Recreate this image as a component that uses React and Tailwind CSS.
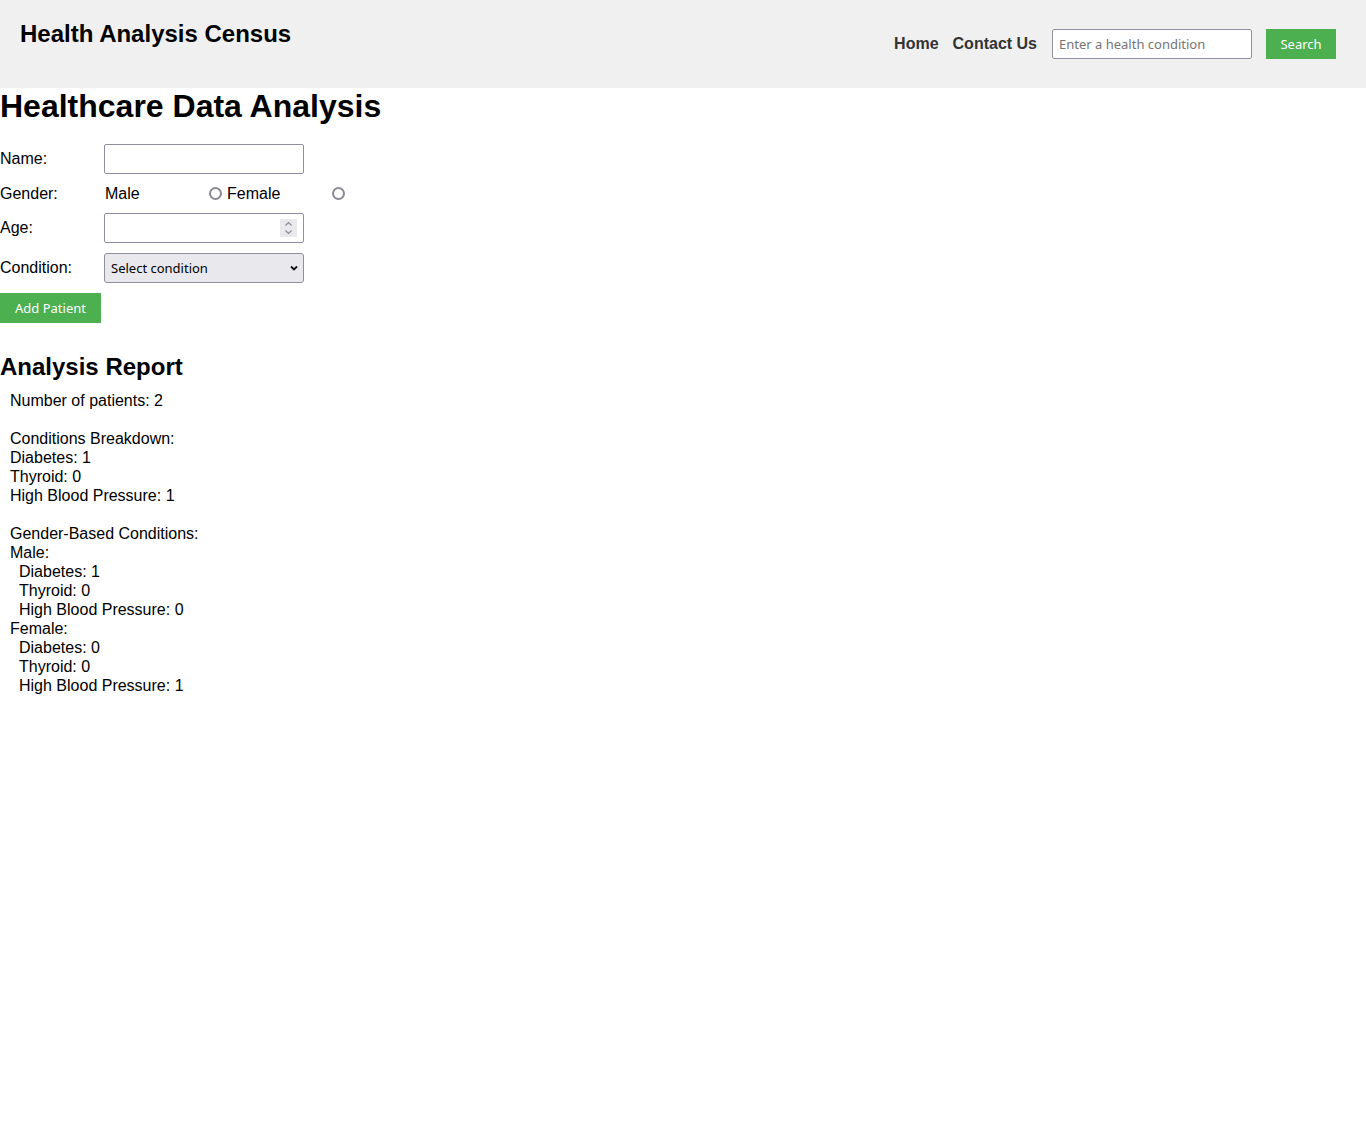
import { useState } from 'react';

const ctrl = "font-['Noto_Sans',sans-serif] text-[13px]";
const radio = 'm-0 h-[13px] w-[13px] appearance-none rounded-full border-2 border-[#8a8a94] bg-white checked:border-[4px] checked:border-[#3b82f6]';

const report = {
  total: 2,
  conditions: { Diabetes: 1, Thyroid: 0, 'High Blood Pressure': 1 },
  byGender: {
    Male: { Diabetes: 1, Thyroid: 0, 'High Blood Pressure': 0 },
    Female: { Diabetes: 0, Thyroid: 0, 'High Blood Pressure': 1 },
  },
};

export default function App() {
  const [gender, setGender] = useState('');

  return (
    <div className="min-h-[1125px] bg-white font-['Liberation_Sans',Arial,sans-serif] text-[16px] leading-[normal] text-black">
      <header className="flex h-[88px] justify-between bg-[#f0f0f0] pl-[20px] pr-[30px] pt-[20px] pb-[20px]">
        <h1 className="self-start text-[24px] font-bold leading-[28px]">Health Analysis Census</h1>
        <nav className="flex items-center">
          <a href="#" className="font-bold text-[#333]">Home</a>
          <a href="#" className="ml-[14px] font-bold text-[#333]">Contact Us</a>
          <input
            type="text"
            placeholder="Enter a health condition"
            className={`${ctrl} ml-[15px] h-[30px] w-[200px] rounded-[2px] border border-[#8f8f9d] bg-white px-[6px] placeholder:text-[#757575]`}
          />
          <button className={`${ctrl} ml-[14px] h-[30px] w-[70px] bg-[#4caf50] text-white`}>Search</button>
        </nav>
      </header>

      <main>
        <h2 className="text-[32px] font-bold leading-[37px]">Healthcare Data Analysis</h2>

        <form className="mt-[19px]" onSubmit={(e) => e.preventDefault()}>
          <div className="flex items-center">
            <label className="w-[104px]">Name:</label>
            <input type="text" className={`${ctrl} h-[30px] w-[200px] rounded-[2px] border border-[#8f8f9d] bg-white px-[6px]`} />
          </div>

          <div className="mt-[10px] flex h-[19px] items-center">
            <label className="w-[104px]">Gender:</label>
            <label className="w-[105px] pl-px">Male</label>
            <input
              type="radio"
              name="gender"
              checked={gender === 'male'}
              onChange={() => setGender('male')}
              className={radio}
            />
            <label className="ml-[5px] w-[105px]">Female</label>
            <input
              type="radio"
              name="gender"
              checked={gender === 'female'}
              onChange={() => setGender('female')}
              className={radio}
            />
          </div>

          <div className="mt-[10px] flex items-center">
            <label className="w-[104px]">Age:</label>
            <div className="relative">
              <input type="number" className={`${ctrl} h-[30px] w-[200px] rounded-[2px] border border-[#8f8f9d] bg-white px-[6px]`} />
              <span className="pointer-events-none absolute right-[7px] top-[6px] flex h-[18px] w-[17px] flex-col items-center justify-center bg-[#e9e9ed]">
                <svg width="9" height="14" viewBox="0 0 9 14" fill="none" stroke="#8a8a8a" strokeWidth="1.1">
                  <path d="M1.5 4.5 L4.5 1.5 L7.5 4.5" />
                  <path d="M1.5 9.5 L4.5 12.5 L7.5 9.5" />
                </svg>
              </span>
            </div>
          </div>

          <div className="mt-[10px] flex items-center">
            <label className="w-[104px]">Condition:</label>
            <div className="relative">
              <select className={`${ctrl} h-[30px] w-[200px] appearance-none rounded-[3px] border border-[#8f8f9d] bg-[#e9e9ed] pl-[6px] text-black`}>
                <option>Select condition</option>
                <option>Diabetes</option>
                <option>Thyroid</option>
                <option>High Blood Pressure</option>
              </select>
              <svg
                className="pointer-events-none absolute right-[6px] top-[12px]"
                width="8"
                height="6"
                viewBox="0 0 8 6"
                fill="none"
                stroke="#111"
                strokeWidth="1.8"
              >
                <path d="M1 1.5 L4 4.5 L7 1.5" />
              </svg>
            </div>
          </div>

          <button type="submit" className={`${ctrl} mt-[10px] h-[30px] w-[101px] bg-[#4caf50] text-white`}>
            Add Patient
          </button>
        </form>

        <h2 className="mt-[30px] text-[24px] font-bold leading-[28px]">Analysis Report</h2>

        <div className="p-[10px] leading-[19px]">
          <div>Number of patients: {report.total}</div>
          <div className="h-[19px]" />
          <div>Conditions Breakdown:</div>
          {Object.entries(report.conditions).map(([k, v]) => (
            <div key={k}>{k}: {v}</div>
          ))}
          <div className="h-[19px]" />
          <div>Gender-Based Conditions:</div>
          {Object.entries(report.byGender).map(([g, conds]) => (
            <div key={g}>
              <div>{g}:</div>
              {Object.entries(conds).map(([k, v]) => (
                <div key={k} className="pl-[9px]">{k}: {v}</div>
              ))}
            </div>
          ))}
        </div>
      </main>
    </div>
  );
}
